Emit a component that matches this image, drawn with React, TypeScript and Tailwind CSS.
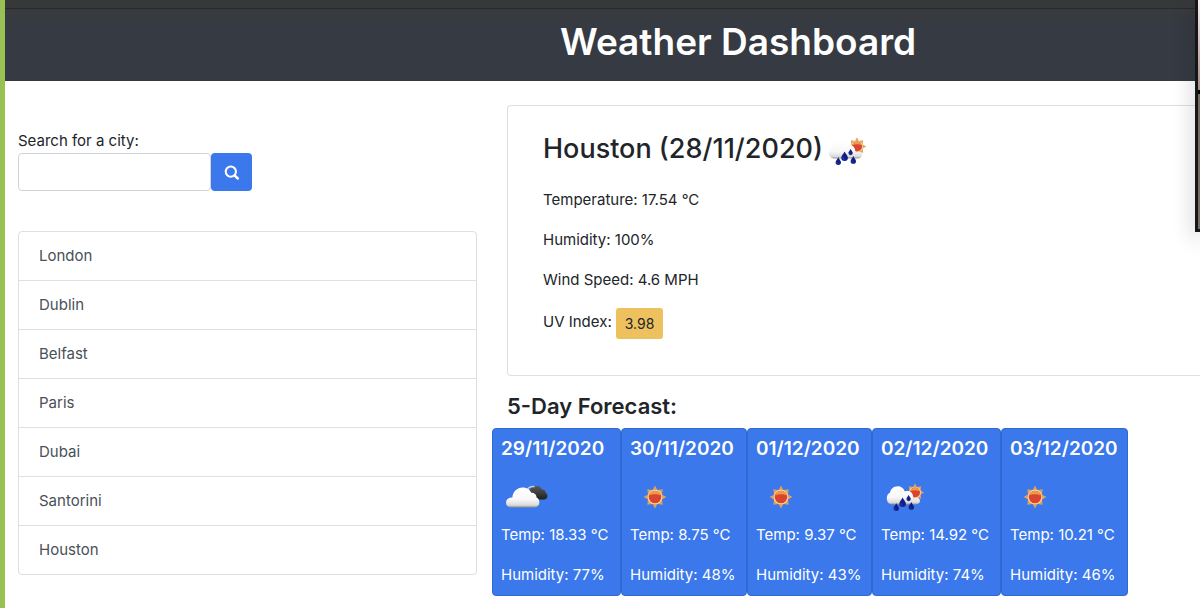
import { useState } from "react";

type IconName = "cloudy" | "sun" | "rain";

const cities = ["London", "Dublin", "Belfast", "Paris", "Dubai", "Santorini", "Houston"];

const forecast: { date: string; icon: IconName; temp: string; humidity: number }[] = [
  { date: "29/11/2020", icon: "cloudy", temp: "18.33", humidity: 77 },
  { date: "30/11/2020", icon: "sun", temp: "8.75", humidity: 48 },
  { date: "01/12/2020", icon: "sun", temp: "9.37", humidity: 43 },
  { date: "02/12/2020", icon: "rain", temp: "14.92", humidity: 74 },
  { date: "03/12/2020", icon: "sun", temp: "10.21", humidity: 46 },
];

const sunRays =
  "M0 -11.5L2.4 -7L7.7 -7.7L7 -2.4L11.5 0L7 2.4L7.7 7.7L2.4 7L0 11.5L-2.4 7L-7.7 7.7L-7 2.4L-11.5 0L-7 -2.4L-7.7 -7.7L-2.4 -7Z";
const cloudShape =
  "M6.5 10.5C6.8 4.5 11.5 0 17 0C21.5 0 24.6 2.5 25.8 5.6C29 5 31.3 7.6 31.2 10.6C33 11.5 34 13.2 34 15.5C34 18.8 31.8 21 28.5 21H5.5C2 21 0 18.8 0 15.8C0 12.8 2.6 10.5 6.5 10.5Z";
const dropShape = "M0 -4.2C1 -2 3 -.4 3 1.5A3 3 0 0 1 -3 1.5C-3 -.4 -1 -2 0 -4.2Z";

function Sun() {
  return (
    <>
      <path d={sunRays} fill="#dfa05c" />
      <circle r="7.3" fill="#f8dcae" />
      <circle r="6.3" fill="#d9452f" />
      <path d="M-5.8 -1.6A6 6 0 0 1 5.8 -1.6C2.5 -3.2 -2.5 -3.2 -5.8 -1.6Z" fill="#ee9a48" />
    </>
  );
}

function Drop() {
  return (
    <>
      <path d={dropShape} fill="#101f86" />
      <path d="M-1.6 1C-1.6 2.6 -.8 3.2 .2 3.4" fill="none" stroke="#3048c0" strokeWidth=".8" />
    </>
  );
}

function WeatherIcon({ name, id }: { name: IconName; id: string }) {
  return (
    <svg viewBox="0 0 50 50" className="size-[50px] shrink-0" aria-hidden="true">
      <defs>
        <linearGradient id={id} x1="0" y1="0" x2="0" y2="1">
          <stop offset="0" stopColor="#ffffff" />
          <stop offset=".6" stopColor="#f8f8f8" />
          <stop offset=".88" stopColor="#dcdcdc" />
          <stop offset="1" stopColor="#929292" />
        </linearGradient>
        <linearGradient id={`${id}-dark`} x1="0" y1="0" x2="0" y2="1">
          <stop offset="0" stopColor="#5a5a5a" />
          <stop offset="1" stopColor="#202020" />
        </linearGradient>
      </defs>
      {name === "sun" && (
        <g transform="translate(25 25)">
          <Sun />
        </g>
      )}
      {name === "cloudy" && (
        <>
          <g transform="translate(24 14)">
            <path d={cloudShape} fill={`url(#${id}-dark)`} transform="scale(.66 .64)" />
            <path d="M1.5 5C3 1.2 6.5 .2 9.6 .6" fill="none" stroke="#c9c9c9" strokeWidth="1.3" />
          </g>
          <path d={cloudShape} fill={`url(#${id})`} transform="translate(5 15.5) scale(.98 .95)" />
        </>
      )}
      {name === "rain" && (
        <>
          <g transform="translate(34 20.5) scale(.8)">
            <Sun />
          </g>
          <path
            d="M9 20.8C9.4 17 12.8 14.2 16.6 14.2C20.2 14.2 22.8 16.2 23.8 19.4C27.5 18.2 31.6 20 32.2 24.4C32.3 25.4 32.4 26 32.4 26.6C35.2 25 39 26 39 28.8C39 31 37 32.6 34.2 32.6H11.5C8 32.6 5.8 30 5.8 26.6C5.8 23.6 7 21.6 9 20.8Z"
            fill={`url(#${id})`}
          />
          <g transform="translate(15.3 35) scale(.9)">
            <Drop />
          </g>
          <g transform="translate(21.6 30) scale(1.1)">
            <Drop />
          </g>
          <g transform="translate(27.6 26) scale(.72)">
            <Drop />
          </g>
          <g transform="translate(30.3 33.8) scale(.9)">
            <Drop />
          </g>
        </>
      )}
    </svg>
  );
}

export default function App() {
  const [query, setQuery] = useState("");

  return (
    <div className="relative min-h-screen overflow-hidden border-l-5 border-[#98c052] bg-white font-['Inter','Liberation_Sans',sans-serif] text-[15px] text-[#212529]">
      <div className="h-[9px] border-b border-[#292a2c] bg-[#37383a]" />
      <header className="bg-linear-to-b from-[#383b3e] to-[#363a42] to-25% pt-[9px] pb-[15px] pl-[555px]">
        <h1 className="text-[37px] leading-[48px] font-semibold whitespace-nowrap text-white">Weather Dashboard</h1>
      </header>

      <div className="flex">
        <aside className="w-[487px] shrink-0 pt-12 pr-[15px] pl-[13px]">
          <form onSubmit={(e) => e.preventDefault()}>
            <label htmlFor="city" className="block leading-6">
              Search for a city:
            </label>
            <div className="flex">
              <input
                id="city"
                type="text"
                value={query}
                onChange={(e) => setQuery(e.target.value)}
                className="h-[38px] w-[193px] rounded border border-[#ced4da] px-3"
              />
              <button
                type="submit"
                aria-label="Search"
                className="flex h-[38px] w-[41px] items-center justify-center rounded bg-[#3a78eb] text-white"
              >
                <svg viewBox="0 0 16 16" className="size-4" fill="none" stroke="currentColor" aria-hidden="true">
                  <circle cx="6.8" cy="7.6" r="5.1" strokeWidth="2.1" />
                  <path d="M10.6 11.4L13.8 14.5" strokeWidth="2.5" strokeLinecap="round" />
                </svg>
              </button>
            </div>
          </form>

          <ul className="mt-10 divide-y divide-[#dfdfdf] rounded border border-[#dfdfdf] text-[#495057]">
            {cities.map((city) => (
              <li key={city}>
                <button type="button" className="block h-12 w-full px-5 text-left leading-6">
                  {city}
                </button>
              </li>
            ))}
          </ul>
        </aside>

        <main className="min-w-0 flex-1 pt-6">
          <section className="ml-[15px] rounded-l border border-r-0 border-[#dfdfdf] pt-5 pb-9 pl-[35px]">
            <div className="flex items-center">
              <h2 className="pb-1 text-[27px] leading-[34px] font-medium whitespace-nowrap">Houston (28/11/2020)</h2>
              <WeatherIcon name="rain" id="today" />
            </div>
            <div className="mt-3 flex flex-col gap-4 leading-6">
              <p>Temperature: 17.54 °C</p>
              <p>Humidity: 100%</p>
              <p>Wind Speed: 4.6 MPH</p>
              <p className="flex items-center gap-1">
                <span className="pb-1">UV Index:</span>
                <span className="rounded-[3px] bg-[#edc25e] px-[9px] py-[5px] text-sm leading-[21px]">3.98</span>
              </p>
            </div>
          </section>

          <h3 className="mt-4 ml-[15px] text-[22px] leading-[29px] font-semibold">5-Day Forecast:</h3>
          <div className="mt-[7px] grid grid-cols-[129px_126px_125px_129px_127px] pb-3">
            {forecast.map((day, i) => (
              <article
                key={day.date}
                className="rounded border border-[#3069d0] bg-[#3a78eb] p-2 whitespace-nowrap text-white"
              >
                <h4 className="text-[19px] leading-6 font-semibold">{day.date}</h4>
                <div className="mt-2 h-[54px] pt-[3px]">
                  <WeatherIcon name={day.icon} id={`day-${i}`} />
                </div>
                <p className="leading-6">Temp: {day.temp} °C</p>
                <p className="mt-4 leading-6">Humidity: {day.humidity}%</p>
              </article>
            ))}
          </div>
        </main>
      </div>

      <div
        aria-hidden="true"
        className="absolute top-0 right-0 flex h-58 w-[5px] flex-col border-b-3 border-l-3 border-[#141617] shadow-[0_6px_20px_rgba(0,0,0,0.4)]"
      >
        <div className="h-[90px] bg-linear-to-b from-[#f7eeee] to-[#a88d86]" />
        <div className="h-1 bg-black" />
        <div className="flex-1 bg-[#766d63]" />
      </div>
    </div>
  );
}
